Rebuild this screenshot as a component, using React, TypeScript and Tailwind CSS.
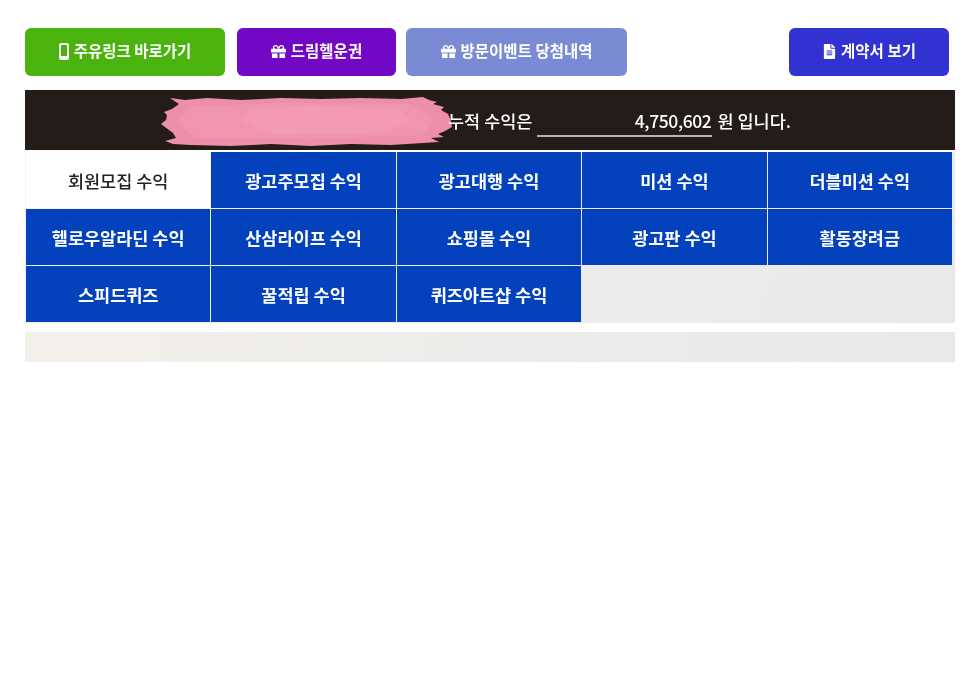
import React from 'react';
import { FaGift, FaFileAlt } from 'react-icons/fa';

const font = "font-['Noto_Sans_CJK_KR','Noto_Sans',sans-serif]";

const cells = [
  '회원모집 수익',
  '광고주모집 수익',
  '광고대행 수익',
  '미션 수익',
  '더블미션 수익',
  '헬로우알라딘 수익',
  '산삼라이프 수익',
  '쇼핑몰 수익',
  '광고판 수익',
  '활동장려금',
  '스피드퀴즈',
  '꿀적립 수익',
  '퀴즈아트샵 수익',
];

const PhoneIcon = () => (
  <svg width="10" height="17" viewBox="0 0 10 17" className="mr-[5px]">
    <rect x="1" y="1" width="8" height="15" rx="1.5" fill="none" stroke="#fff" strokeWidth="2" />
    <rect x="1" y="13" width="8" height="3" fill="#fff" />
  </svg>
);

// smeared pink mark over the member name
const Scribble = () => (
  <svg width="292" height="50" viewBox="0 0 292 50" className="absolute left-[136px] top-[7px]">
    <path
      d="M9 1 L24 3 L46 1 L80 3 L120 1 L160 2 L200 1 L240 2 L262 0 L268 3 L276 5 L272 7 L283 10 L280 13 L287 17 L290 24 L291 30 L284 34 L277 37 L283 40 L270 41 L278 45 L262 46 L230 48 L190 47 L150 49 L110 47 L70 49 L30 48 L12 47 L4 44 L15 41 L12 36 L8 33 L0 27 L5 23 L6 18 L3 15 L11 12 L18 7 Z"
      fill="#ee8fa9"
    />
    <path d="M28 10 L120 6 L250 7 L274 22 L262 38 L150 42 L34 41 L16 26 Z" fill="#f095ae" />
    <path d="M90 12 L150 8 L240 12 L250 24 L220 36 L110 38 L80 24 Z" fill="#f29bb3" />
  </svg>
);

export default function App() {
  return (
    <div className={`min-h-[683px] bg-white pl-[25px] pr-[11px] pt-[28px] blur-[0.4px] ${font}`}>
      <div className="flex h-[48px] pr-[6px] text-[15.5px] font-bold text-white">
        <a className="flex w-[200px] items-center justify-center rounded-[6px] bg-[#4bb30e] pb-[2px]">
          <PhoneIcon />
          주유링크 바로가기
        </a>
        <a className="ml-[12px] flex w-[159px] items-center justify-center rounded-[6px] bg-[#7207c4] pb-[2px]">
          <FaGift className="mr-[5px] text-[15px]" />
          드림헬운권
        </a>
        <a className="ml-[10px] flex w-[221px] items-center justify-center rounded-[6px] bg-[#7b8bd3] pb-[2px]">
          <FaGift className="mr-[5px] text-[15px]" />
          방문이벤트 당첨내역
        </a>
        <a className="ml-auto flex w-[160px] items-center justify-center rounded-[6px] bg-[#3232d2] pb-[2px]">
          <FaFileAlt className="mr-[4px] text-[15px]" />
          계약서 보기
        </a>
      </div>

      <div className="relative mt-[14px] flex h-[60px] items-center bg-[#241c18] pl-[423px] pt-[2px] text-[17.5px] font-medium text-white">
        <Scribble />
        <span className="relative">누적 수익은</span>
        <span className="relative ml-[5px] w-[175px] border-b-2 border-[#b9b5b0] pr-[1px] text-right leading-[29px] tracking-[-0.4px]">4,750,602</span>
        <span className="relative ml-[5px]">원 입니다.</span>
      </div>

      <div className="mt-[2px] grid grid-cols-5 gap-px bg-[linear-gradient(120deg,#f6f3ee,#e9e9ea)] pb-px pl-px pr-[3px] text-[17.5px] font-bold text-white">
        {cells.map((label, i) => (
          <div
            key={label}
            className={`flex h-[56px] items-center justify-center pt-[2px] ${i === 0 ? 'bg-white font-medium text-[#222]' : 'bg-[#0441bd]'}`}
          >
            {label}
          </div>
        ))}
      </div>

      <div className="mt-[9px] h-[30px] bg-[linear-gradient(90deg,#f3f0eb,#e9e9ea)]" />
    </div>
  );
}
